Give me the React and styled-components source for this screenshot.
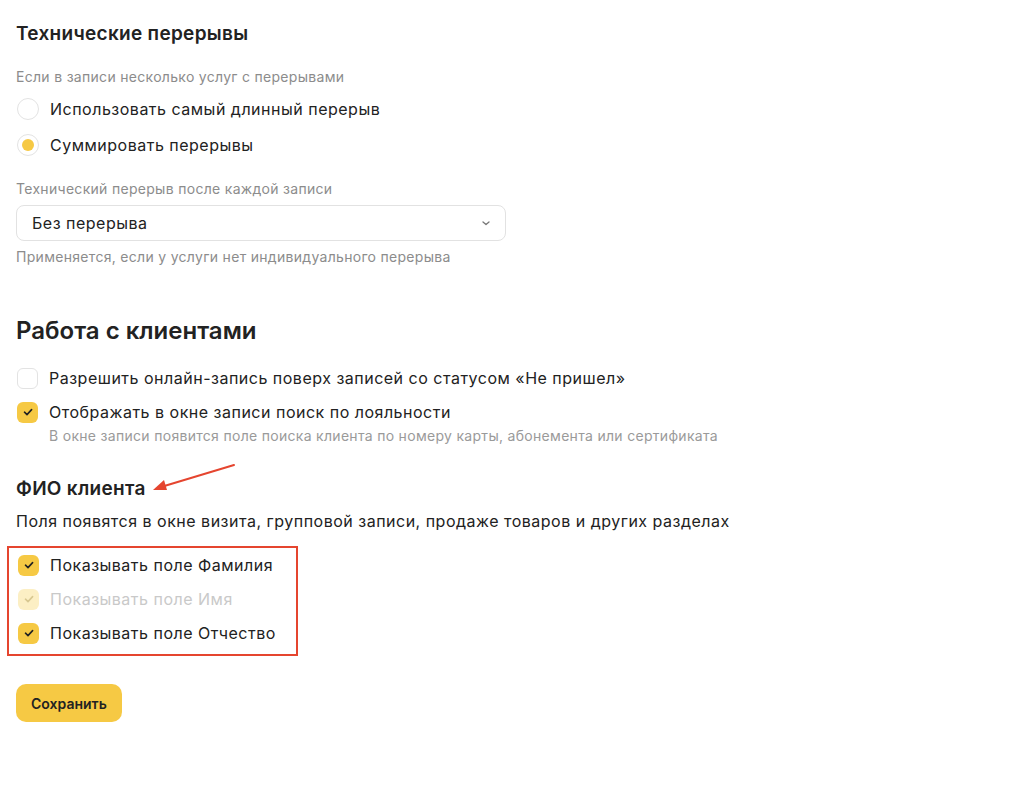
import React from "react";
import styled, { createGlobalStyle } from "styled-components";

const GlobalStyle = createGlobalStyle`
    body {
        margin: 0;
        background: #ffffff;
        font-family: Inter, "Noto Sans", sans-serif;
        color: #222222;
    }
`;

const Page = styled.div`
    padding: 22px 16px 40px 16px;
`;

const SubTitle = styled.h3`
    margin: 0;
    font-size: 19px;
    line-height: 24px;
    font-weight: 600;
    letter-spacing: 0.3px;
    color: #222222;
`;

const SectionTitle = styled.h2`
    margin: 48px 0 0 0;
    font-size: 24px;
    line-height: 32px;
    font-weight: 600;
    color: #222222;
`;

const Caption = styled.div`
    margin-top: ${(props) => props.mt || 0}px;
    font-size: 14px;
    line-height: 20px;
    letter-spacing: 0.3px;
    color: #8c8c8c;
`;

const RadioGroup = styled.div`
    margin-top: 4px;
`;

const RadioRow = styled.label`
    display: flex;
    align-items: center;
    height: 36px;
    gap: 11px;
    font-size: 16px;
    letter-spacing: 0.5px;
    color: #222222;
`;

const RadioCircle = styled.span`
    width: 20px;
    height: 20px;
    margin-left: 1px;
    border-radius: 50%;
    border: 1px solid #e3e3e3;
    display: flex;
    align-items: center;
    justify-content: center;
    &::after {
        content: "";
        width: 12px;
        height: 12px;
        border-radius: 50%;
        background: #f6c944;
        display: ${(props) => (props.checked ? "block" : "none")};
    }
`;

const Select = styled.div`
    margin-top: 6px;
    width: 490px;
    height: 36px;
    box-sizing: border-box;
    border: 1px solid #e2e2e2;
    border-radius: 8px;
    display: flex;
    align-items: center;
    justify-content: space-between;
    padding: 0 14px 0 15px;
    font-size: 16px;
    letter-spacing: 0.5px;
    color: #222222;
`;

const Checks = styled.div`
    display: flex;
    flex-direction: column;
    gap: 12px;
    margin-top: ${(props) => props.mt || 0}px;
`;

const CheckRow = styled.div`
    display: flex;
    flex-direction: column;
`;

const CheckLine = styled.label`
    display: flex;
    align-items: center;
    gap: 11px;
    font-size: 16px;
    line-height: 22px;
    letter-spacing: 0.5px;
    color: ${(props) => (props.disabled ? "#c9c9c9" : "#222222")};
`;

const Box = styled.span`
    width: 21px;
    height: 21px;
    margin-left: 1px;
    box-sizing: border-box;
    border-radius: 6px;
    border: ${(props) => (props.checked ? "none" : "1px solid #e3e3e3")};
    background: ${(props) =>
        props.checked ? (props.disabled ? "#fcefc4" : "#f6c944") : "#ffffff"};
    display: flex;
    align-items: center;
    justify-content: center;
    color: ${(props) => (props.disabled ? "#d8c891" : "#222222")};
`;

const Hint = styled.div`
    margin: 5px 0 0 33px;
    font-size: 14px;
    line-height: 16px;
    letter-spacing: 0.3px;
    color: #9a9a9a;
`;

const HeadingWrap = styled.div`
    position: relative;
    margin-top: 33px;
`;

const Arrow = styled.svg`
    position: absolute;
    left: 117px;
    top: -16px;
`;

const Text = styled.p`
    margin: 9px 0 0 0;
    font-size: 16px;
    line-height: 22px;
    letter-spacing: 0.5px;
    color: #222222;
`;

const Highlight = styled.div`
    margin: 14px 0 0 -9px;
    width: 291px;
    box-sizing: border-box;
    border: 2px solid #e5452f;
    padding: 6px 0 10px 8px;
`;

const Button = styled.button`
    margin-top: 28px;
    height: 38px;
    padding: 0 15px;
    border: none;
    border-radius: 10px;
    background: #f6c944;
    font-family: Inter, "Noto Sans", sans-serif;
    font-size: 14px;
    font-weight: 600;
    color: #222222;
`;

const Tick = () => (
    <svg width="12" height="12" viewBox="0 0 12 12" fill="none">
        <path
            d="M2.5 6.2 L5 8.6 L9.6 3.6"
            stroke="currentColor"
            strokeWidth="1.6"
            strokeLinecap="round"
            strokeLinejoin="round"
        />
    </svg>
);

const Check = ({ checked, disabled, children, hint }) => (
    <CheckRow>
        <CheckLine disabled={disabled}>
            <Box checked={checked} disabled={disabled}>
                {checked && <Tick />}
            </Box>
            {children}
        </CheckLine>
        {hint && <Hint>{hint}</Hint>}
    </CheckRow>
);

export default function App() {
    return (
        <>
            <GlobalStyle />
            <Page>
                <SubTitle>Технические перерывы</SubTitle>
                <Caption mt={21}>Если в записи несколько услуг с перерывами</Caption>
                <RadioGroup>
                    <RadioRow>
                        <RadioCircle />
                        Использовать самый длинный перерыв
                    </RadioRow>
                    <RadioRow>
                        <RadioCircle checked />
                        Суммировать перерывы
                    </RadioRow>
                </RadioGroup>
                <Caption mt={16}>Технический перерыв после каждой записи</Caption>
                <Select>
                    <span>Без перерыва</span>
                    <svg width="10" height="10" viewBox="0 0 10 10" fill="none">
                        <path
                            d="M2 4 L5 6.5 L8 4"
                            stroke="#777"
                            strokeWidth="1.3"
                            strokeLinecap="round"
                            strokeLinejoin="round"
                        />
                    </svg>
                </Select>
                <Caption mt={6}>Применяется, если у услуги нет индивидуального перерыва</Caption>

                <SectionTitle>Работа с клиентами</SectionTitle>
                <Checks mt={20}>
                    <Check>Разрешить онлайн-запись поверх записей со статусом «Не пришел»</Check>
                    <Check
                        checked
                        hint="В окне записи появится поле поиска клиента по номеру карты, абонемента или сертификата"
                    >
                        Отображать в окне записи поиск по лояльности
                    </Check>
                </Checks>

                <HeadingWrap>
                    <SubTitle>ФИО клиента</SubTitle>
                    <Arrow width="110" height="36" viewBox="0 0 110 36" fill="none">
                        <path d="M101 4 L28 26" stroke="#e5452f" strokeWidth="2" strokeLinecap="round" />
                        <path d="M20 29 L31 19 L34 29 Z" fill="#e5452f" />
                    </Arrow>
                </HeadingWrap>
                <Text>Поля появятся в окне визита, групповой записи, продаже товаров и других разделах</Text>

                <Highlight>
                    <Checks>
                        <Check checked>Показывать поле Фамилия</Check>
                        <Check checked disabled>Показывать поле Имя</Check>
                        <Check checked>Показывать поле Отчество</Check>
                    </Checks>
                </Highlight>

                <Button>Сохранить</Button>
            </Page>
        </>
    );
}
